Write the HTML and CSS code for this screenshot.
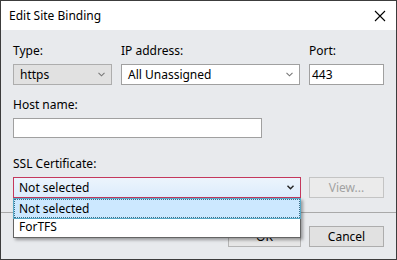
FILE: index.html
```html
<!DOCTYPE html>
<html lang="en">

<head>
    <meta charset="UTF-8">
    <title>Edit Site Binding</title>
    <link rel="stylesheet" href="styles.css">
</head>

<body>
    <div class="window">
        <div class="title-bar">
            <span class="title">Edit Site Binding</span>
            <svg class="close" width="12" height="12" viewBox="0 0 12 12">
                <path d="M1 1 L11 11 M11 1 L1 11" stroke="#000" stroke-width="1.1" fill="none" />
            </svg>
        </div>
        <div class="content">
            <div class="row top-row">
                <div class="field">
                    <label>Type:</label>
                    <div class="select type-select">
                        <span>https</span>
                        <svg class="chevron" width="7" height="5" viewBox="0 0 7 5">
                            <path d="M0.5 0.8 L3.5 3.8 L6.5 0.8" stroke="#777" stroke-width="1.1" fill="none" />
                        </svg>
                    </div>
                </div>
                <div class="field">
                    <label>IP address:</label>
                    <div class="select white-select">
                        <span>All Unassigned</span>
                        <svg class="chevron" width="7" height="5" viewBox="0 0 7 5">
                            <path d="M0.5 0.8 L3.5 3.8 L6.5 0.8" stroke="#777" stroke-width="1.1" fill="none" />
                        </svg>
                    </div>
                </div>
                <div class="field">
                    <label>Port:</label>
                    <div class="textbox">443</div>
                </div>
            </div>

            <div class="field host">
                <label>Host name:</label>
                <div class="textbox host-box"></div>
            </div>

            <div class="field ssl">
                <label>SSL Certificate:</label>
                <div class="ssl-row">
                    <div class="ssl-wrap">
                        <div class="select open-select">
                            <span>Not selected</span>
                            <svg class="chevron" width="7" height="5" viewBox="0 0 7 5">
                                <path d="M0.5 0.8 L3.5 3.8 L6.5 0.8" stroke="#222" stroke-width="1.4" fill="none" />
                            </svg>
                        </div>
                        <ul class="dropdown">
                            <li class="selected">Not selected</li>
                            <li>ForTFS</li>
                        </ul>
                    </div>
                    <button class="btn disabled">View...</button>
                </div>
            </div>
        </div>
        <div class="footer">
            <button class="btn ok">OK</button>
            <button class="btn">Cancel</button>
        </div>
    </div>
</body>

</html>
```

FILE: styles.css
```css
body {
    margin: 0;
    font-family: "Noto Sans", "Open Sans", Arial, sans-serif;
    font-size: 12px;
    color: #000;
    background: #fff;
}

.window {
    width: 397px;
    height: 260px;
    box-sizing: border-box;
    border: 1px solid #3c3c3c;
    background-color: #e8eaed;
    display: flex;
    flex-direction: column;
}

.title-bar {
    height: 29px;
    background: #fff;
    display: flex;
    align-items: center;
    justify-content: space-between;
    padding: 0 10px 0 8px;
}

.title {
    font-size: 12px;
    padding-bottom: 1px;
}

.content {
    padding: 13px 12px 0 12px;
}

.row {
    display: flex;
    gap: 9px;
}

.field {
    display: flex;
    flex-direction: column;
}

.field label {
    height: 16px;
    line-height: 16px;
    margin-bottom: 5px;
}

.top-row .field:nth-child(1) {
    width: 99px;
}

.top-row .field:nth-child(2) {
    width: 179px;
}

.top-row .field:nth-child(3) {
    width: 75px;
}

.select,
.textbox {
    height: 21px;
    box-sizing: border-box;
    display: flex;
    align-items: center;
    justify-content: space-between;
    padding: 0 6px 0 6px;
}

.type-select {
    background: #e1e1e1;
    border: 1px solid #adadad;
}

.white-select {
    background: #fff;
    border: 1px solid #a0a0a0;
}

.textbox {
    background: #fff;
    border: 1px solid #a0a0a0;
    padding-left: 2px;
}

.host {
    margin-top: 12px;
}

.host-box {
    width: 249px;
    height: 20px;
}

.ssl {
    margin-top: 18px;
}

.ssl-row {
    display: flex;
    gap: 8px;
}

.ssl-wrap {
    position: relative;
    width: 288px;
}

.open-select {
    background: linear-gradient(#ecf4fc, #dcecfc);
    border: 1px solid #c4385c;
    padding-left: 5px;
}

.dropdown {
    position: absolute;
    left: 0;
    top: 21px;
    width: 288px;
    margin: 0;
    padding: 0;
    list-style: none;
    box-sizing: border-box;
    background: #fff;
    border: 1px solid #646464;
    box-shadow: 2px 2px 3px rgba(0, 0, 0, 0.35);
}

.dropdown li {
    height: 19px;
    line-height: 18px;
    padding-left: 5px;
    box-sizing: border-box;
}

.dropdown li.selected {
    background: #cce8ff;
    border: 1px dotted #3b6f88;
    padding-left: 4px;
    outline: 1px solid #56a8c6;
}

.btn {
    width: 75px;
    height: 21px;
    font-family: inherit;
    font-size: 12px;
    background: #e1e1e1;
    border: 1px solid #adadad;
    padding: 0;
    color: #000;
}

.btn.disabled {
    background: #ebebeb;
    border-color: #c4c4c4;
    color: #a2a2a2;
}

.footer {
    margin-top: 14px;
    border-top: 1px solid #a9a9a9;
    display: flex;
    justify-content: flex-end;
    gap: 8px;
    padding: 13px 12px 0 0;
}

.btn.ok {
    width: 73px;
    background: #e6e6e6;
    border-color: #b5b5b5;
}
```
